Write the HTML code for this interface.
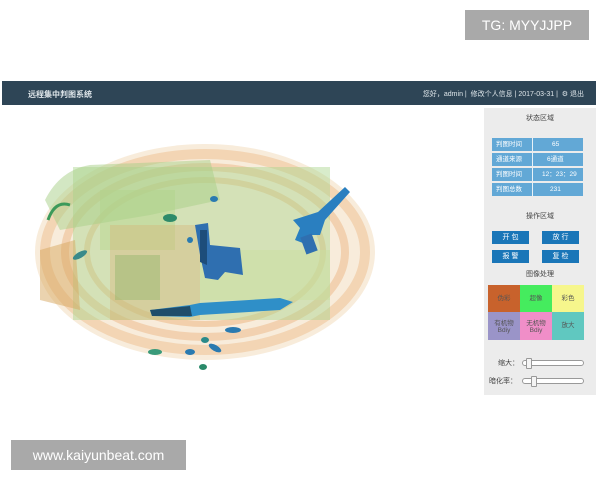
<!DOCTYPE html>
<html><head><meta charset="utf-8"><style>
body{margin:0;width:600px;height:480px;background:#fff;position:relative;overflow:hidden;font-family:"Liberation Sans","Noto Sans CJK SC",sans-serif;}
.nav{position:absolute;left:2px;top:81px;width:594px;height:24px;background:#2e4556;color:#dfe6ea;font-size:8px;}
.nav .t{position:absolute;left:26px;top:8px;font-weight:bold;font-size:8px;}
.nav .r{position:absolute;right:12px;top:8px;font-size:7px;}
.panel{position:absolute;left:484px;top:108px;width:112px;height:287px;background:#ececec;}
.h{position:absolute;left:0;width:112px;text-align:center;font-size:7px;color:#444;}
.tb{position:absolute;left:8px;width:91px;height:13px;background:#62a8d6;color:#fff;font-size:6.5px;line-height:13px;}
.tb span{position:absolute;top:0;}
.tb i{position:absolute;left:40px;top:0;width:1px;height:13px;background:#e8f2f8;}
.btn{position:absolute;width:37px;height:13px;background:#1a76b8;color:#fff;font-size:7px;text-align:center;line-height:13px;}
.c{position:absolute;width:32px;font-size:6.5px;text-align:center;color:#555;}
.sl{position:absolute;left:38px;width:60px;height:4px;border:1px solid #999;border-radius:3px;background:#fff;}
.sl b{position:absolute;top:-3px;width:4px;height:9px;border:1px solid #999;background:#f4f4f4;border-radius:1px;}
.wm{position:absolute;background:#a9a9a9;color:#fff;font-size:14px;}
</style></head><body>
<div class="wm" style="left:465px;top:10px;width:124px;height:30px;line-height:30px;text-align:center;">TG: MYYJJPP</div>
<div class="nav"><div class="t">远程集中判图系统</div><div class="r">您好，admin | &nbsp;修改个人信息 | 2017-03-31 | &nbsp;⚙ 退出</div></div>

<svg style="position:absolute;left:0;top:110px" width="480" height="280" viewBox="0 110 480 280">
<ellipse cx="205" cy="252" rx="170" ry="108" fill="#f5e4cc" opacity=".7"/>
<ellipse cx="205" cy="252" rx="160" ry="98" fill="none" stroke="#edbd8e" stroke-width="10" opacity=".5"/>
<ellipse cx="205" cy="252" rx="140" ry="85" fill="none" stroke="#ecb27c" stroke-width="8" opacity=".45"/>
<ellipse cx="205" cy="252" rx="118" ry="72" fill="none" stroke="#eaac70" stroke-width="6" opacity=".45"/>
<rect x="73" y="167" width="257" height="153" fill="#a8d48c" opacity=".45"/>
<rect x="100" y="190" width="75" height="60" fill="#b7d890" opacity=".5"/>
<rect x="110" y="225" width="90" height="95" fill="#d8b070" opacity=".35"/>
<rect x="200" y="250" width="130" height="50" fill="#c9e0a0" opacity=".5"/>
<path d="M45 200 Q60 170 90 165 L210 160 L220 200 L150 215 L60 230Z" fill="#a8d088" opacity=".5"/>
<path d="M40 250 L75 240 L80 310 L40 300Z" fill="#d8a860" opacity=".5"/>
<path d="M195 225 L208 223 L210 245 L240 248 L243 275 L225 272 L218 280 L205 278 L200 255Z" fill="#2f6fb0"/>
<path d="M200 230 L207 230 L207 265 L200 262Z" fill="#1d4d7a"/>
<path d="M345 187 L350 192 L325 220 L320 235 L312 235 L308 245 L295 240 L300 228 L293 220 L318 212Z" fill="#2a7fc0"/>
<rect x="303" y="235" width="12" height="18" fill="#2f6fb0" transform="rotate(-20 309 244)"/>
<path d="M150 310 L190 305 L200 303 L280 298 L293 302 L280 310 L200 315 L190 317 L152 316Z" fill="#2f8fc8"/>
<path d="M150 310 L190 306 L192 316 L152 316Z" fill="#1f4d6a"/>
<ellipse cx="170" cy="218" rx="7" ry="4" fill="#2e8a6a"/>
<ellipse cx="214" cy="199" rx="4" ry="3" fill="#2a7ab0"/>
<ellipse cx="190" cy="240" rx="3" ry="3" fill="#2a7ab0"/>
<ellipse cx="233" cy="330" rx="8" ry="3" fill="#2a7ab0"/>
<ellipse cx="215" cy="348" rx="7" ry="3" fill="#2a7ab0" transform="rotate(30 215 348)"/>
<ellipse cx="205" cy="340" rx="4" ry="3" fill="#2a8a8a"/>
<ellipse cx="190" cy="352" rx="5" ry="3" fill="#2a7ab0"/>
<ellipse cx="155" cy="352" rx="7" ry="3" fill="#3a9a7a"/>
<ellipse cx="203" cy="367" rx="4" ry="3" fill="#2a8a6a"/>
<ellipse cx="80" cy="255" rx="8" ry="3" fill="#3a8a8a" transform="rotate(-30 80 255)"/>
<path d="M48 220 Q55 200 70 205" fill="none" stroke="#3c9a5a" stroke-width="3"/>
<rect x="115" y="255" width="45" height="45" fill="#9ab870" opacity=".5"/>
</svg>

<div class="panel">
<div class="h" style="top:5px">状态区域</div>
<div class="tb" style="top:30px"><span style="left:4px">判图时间</span><i></i><span style="left:60px">65</span></div>
<div class="tb" style="top:45px"><span style="left:4px">通道来源</span><i></i><span style="left:55px">6通道</span></div>
<div class="tb" style="top:60px"><span style="left:4px">判图时间</span><i></i><span style="left:50px">12：23：29</span></div>
<div class="tb" style="top:75px"><span style="left:4px">判图总数</span><i></i><span style="left:58px">231</span></div>
<div class="h" style="top:103px">操作区域</div>
<div class="btn" style="left:8px;top:123px">开 包</div>
<div class="btn" style="left:58px;top:123px">放 行</div>
<div class="btn" style="left:8px;top:142px">报 警</div>
<div class="btn" style="left:58px;top:142px">复 检</div>
<div class="h" style="top:161px">图像处理</div>
<div class="c" style="left:4px;top:177px;height:27px;line-height:27px;background:#c8622c">伪彩</div>
<div class="c" style="left:36px;top:177px;height:27px;line-height:27px;background:#45ec5e">超像</div>
<div class="c" style="left:68px;top:177px;height:27px;line-height:27px;background:#f6f68c">彩色</div>
<div class="c" style="left:4px;top:204px;height:28px;padding-top:5px;box-sizing:border-box;background:#9a94c8">有机物<br>Bdiy</div>
<div class="c" style="left:36px;top:204px;height:28px;padding-top:5px;box-sizing:border-box;background:#f08ec8">无机物<br>Bdiy</div>
<div class="c" style="left:68px;top:204px;height:28px;line-height:28px;background:#60c8c0">放大</div>
<div style="position:absolute;left:14px;top:250px;font-size:7px;color:#444">缩大：</div>
<div class="sl" style="top:252px"><b style="left:3px"></b></div>
<div style="position:absolute;left:5px;top:268px;font-size:7px;color:#444">暗化率：</div>
<div class="sl" style="top:270px"><b style="left:8px"></b></div>
</div>

<div class="wm" style="left:11px;top:440px;width:175px;height:30px;line-height:30px;text-align:center;">www.kaiyunbeat.com</div>
</body></html>
